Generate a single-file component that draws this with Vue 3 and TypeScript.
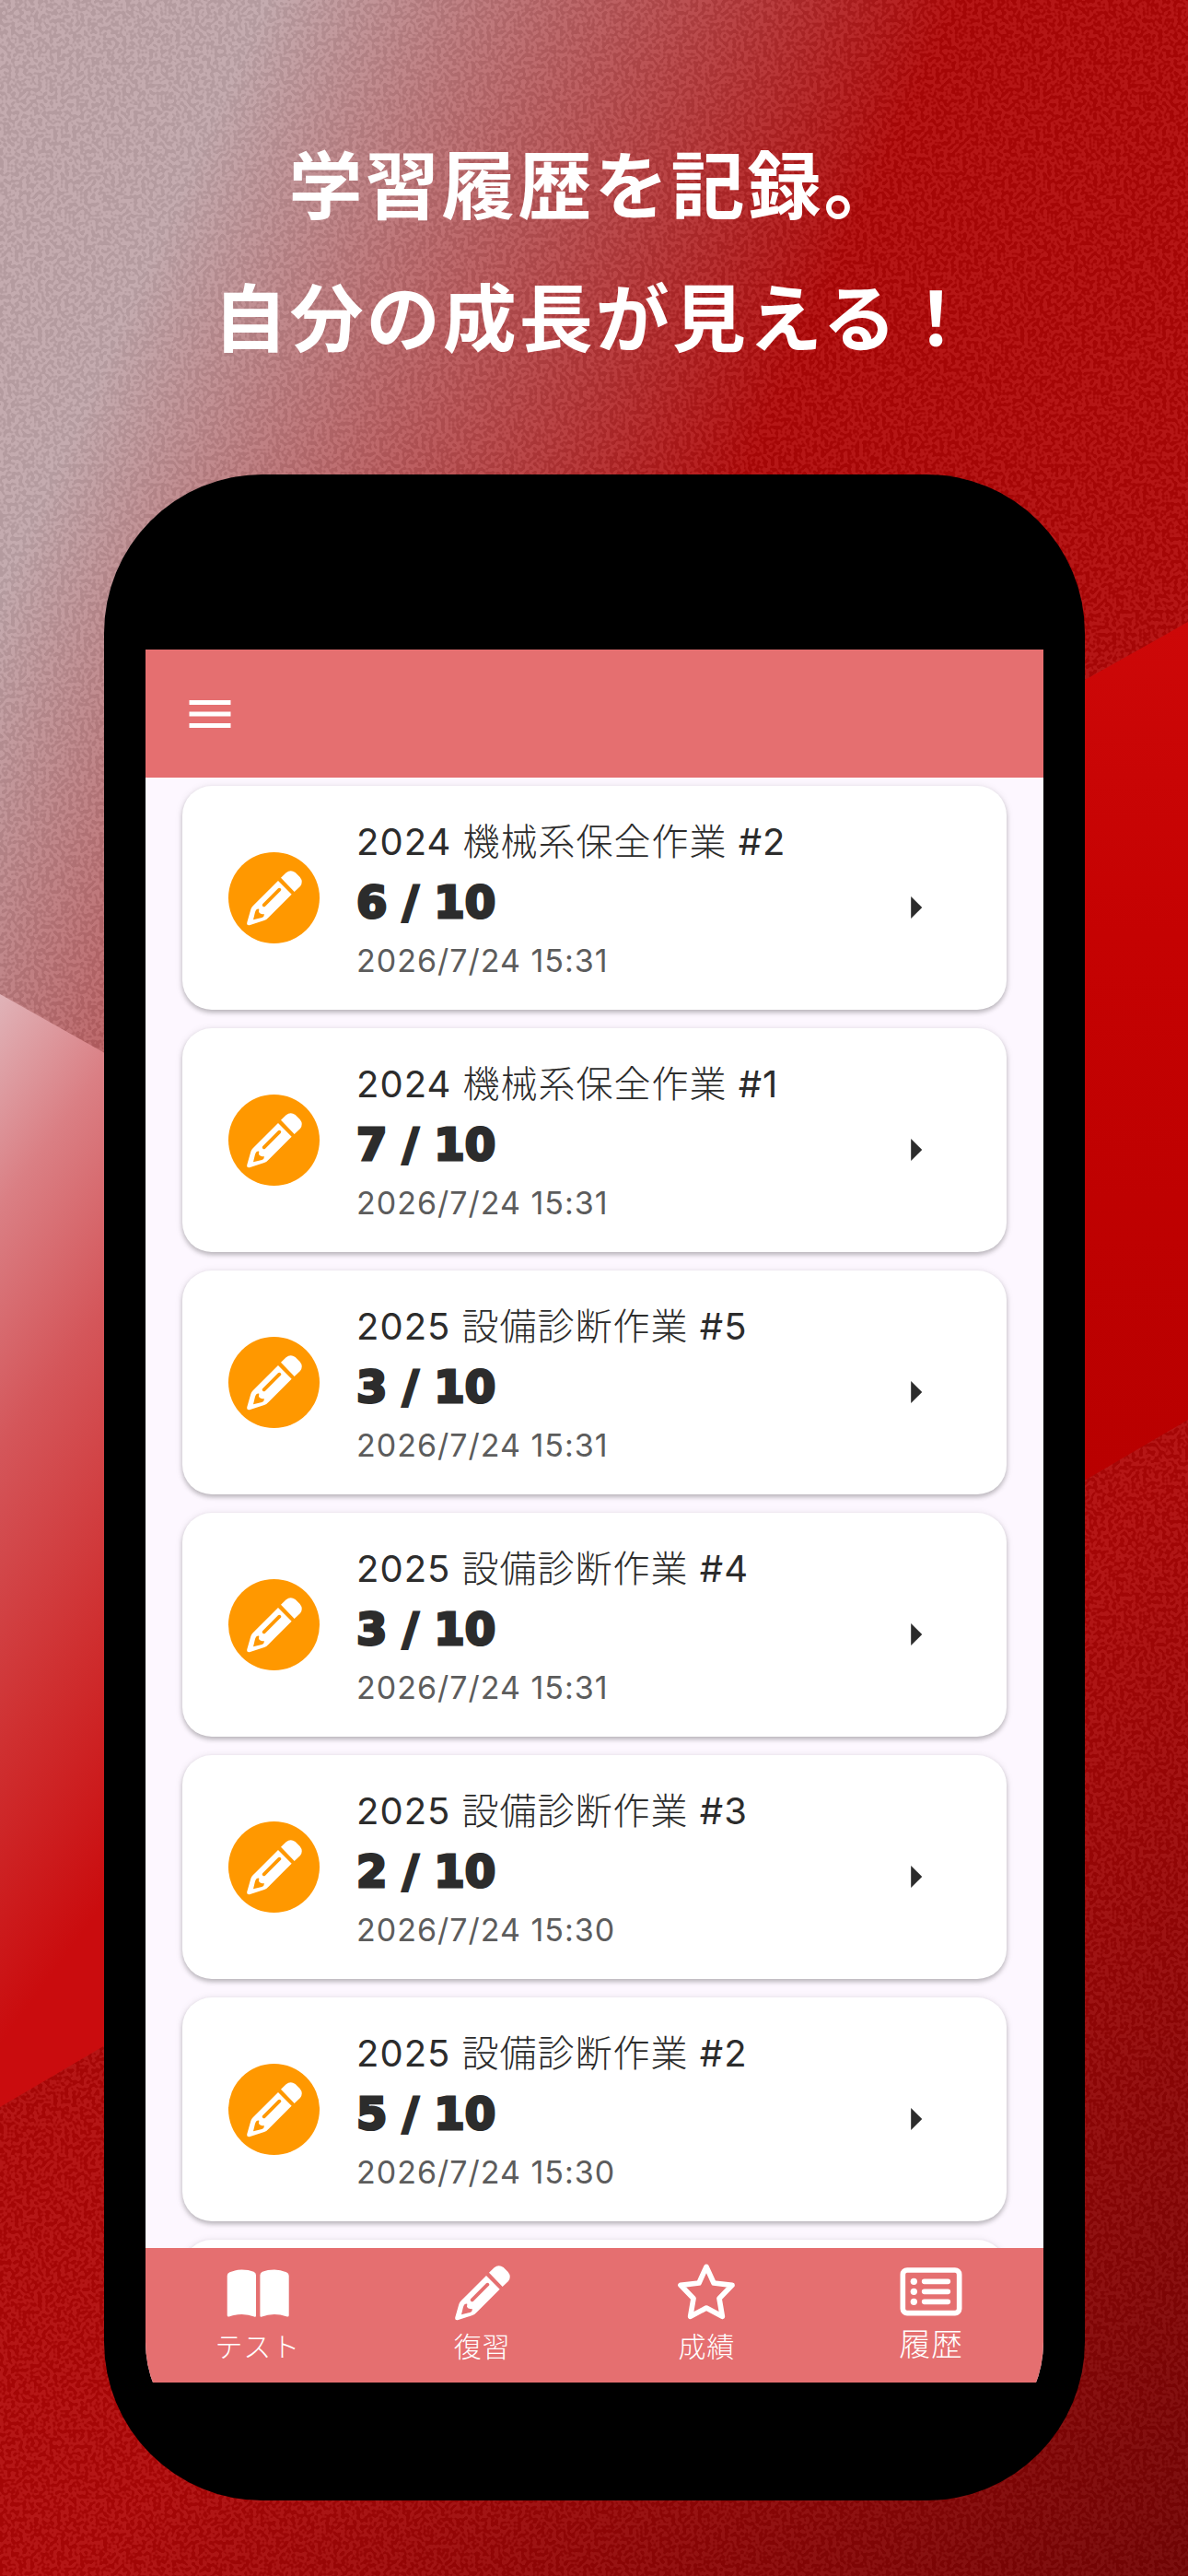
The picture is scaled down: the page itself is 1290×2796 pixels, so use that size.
<script setup lang="ts">
interface HistoryEntry {
  title: string
  score: string
  date: string
}

interface Tab {
  id: 'test' | 'review' | 'results' | 'history'
  label: string
}

const headline: string[] = ['学習履歴を記録。', '自分の成長が見える！']

const entries: HistoryEntry[] = [
  { title: '2024 機械系保全作業 #2', score: '6 / 10', date: '2026/7/24 15:31' },
  { title: '2024 機械系保全作業 #1', score: '7 / 10', date: '2026/7/24 15:31' },
  { title: '2025 設備診断作業 #5', score: '3 / 10', date: '2026/7/24 15:31' },
  { title: '2025 設備診断作業 #4', score: '3 / 10', date: '2026/7/24 15:31' },
  { title: '2025 設備診断作業 #3', score: '2 / 10', date: '2026/7/24 15:30' },
  { title: '2025 設備診断作業 #2', score: '5 / 10', date: '2026/7/24 15:30' },
]

const tabs: Tab[] = [
  { id: 'test', label: 'テスト' },
  { id: 'review', label: '復習' },
  { id: 'results', label: '成績' },
  { id: 'history', label: '履歴' },
]

const activeTab: Tab['id'] = 'history'

const pencilPath =
  'M1143 262L1160 246Q1174 234 1190 245L1205 260Q1217 275 1206 290L1187 308Z' +
  'M1134 272L1178 316L1103 391Q1097 398 1089 401L1043 416Q1030 419 1033 407L1045 365Q1047 359 1052 354Z' +
  'M1084 347L1134 297A5.5 5.5 0 0 1 1142 305L1092 355A5.5 5.5 0 0 1 1084 347Z' +
  'M1053 399L1059 374Q1063 362 1072 364L1071 373Q1075 381 1089 381Q1089 389 1081 392Z'

const pagePath =
  'M2.7 17Q2.7 14.5 5.4 13.3Q12 10.5 18.5 10.5Q26 10.5 31.5 12.8Q34 14 34 16.5V60.5' +
  'Q34 62.2 32 61.5Q26 59 18.5 59Q12 59 5.5 61.3Q2.7 62.3 2.7 60Z'
</script>

<template>
  <div class="poster">
    <svg class="backdrop" viewBox="0 0 1290 2796" preserveAspectRatio="xMidYMid slice" aria-hidden="true">
      <defs>
        <linearGradient id="sweep" gradientUnits="userSpaceOnUse" x1="241" y1="108" x2="865" y2="389">
          <stop offset="0" stop-color="#b49b9f" />
          <stop offset="1" stop-color="#a50606" />
        </linearGradient>
        <linearGradient id="shade" gradientUnits="userSpaceOnUse" x1="1430" y1="1430" x2="2043" y2="2043">
          <stop offset="0" stop-color="#000" stop-opacity="0" />
          <stop offset="1" stop-color="#000" stop-opacity="0.33" />
        </linearGradient>
        <linearGradient id="left-panel" gradientUnits="userSpaceOnUse" x1="517" y1="383" x2="1060" y2="784">
          <stop offset="0" stop-color="#e0b2b7" />
          <stop offset="0.2" stop-color="#da7f84" />
          <stop offset="0.43" stop-color="#d4565a" />
          <stop offset="0.72" stop-color="#cf3031" />
          <stop offset="1" stop-color="#ca0c0e" />
        </linearGradient>
        <linearGradient id="right-panel" x1="0" y1="0" x2="0" y2="1">
          <stop offset="0" stop-color="#cd0808" />
          <stop offset="0.35" stop-color="#c50202" />
          <stop offset="1" stop-color="#b80000" />
        </linearGradient>
        <filter id="grain" x="0" y="0" width="100%" height="100%" color-interpolation-filters="sRGB">
          <feTurbulence type="fractalNoise" baseFrequency="0.24" numOctaves="1" seed="4" />
          <feColorMatrix values="0 0 0 0 0.063  0 0 0 0 0.063  0 0 0 0 0.063  10 0 0 0 -4.5" />
        </filter>
      </defs>
      <rect width="1290" height="2796" fill="url(#sweep)" />
      <rect class="grain" width="1290" height="2796" filter="url(#grain)" />
      <rect width="1290" height="2796" fill="url(#shade)" />
      <path d="M0 1079L160 1169V2193L0 2287Z" fill="url(#left-panel)" />
      <path d="M1290 675L1130 765V1635L1290 1541Z" fill="url(#right-panel)" />
    </svg>

    <h1 class="headline">
      <span v-for="line in headline" :key="line" class="headline-line">{{ line }}</span>
    </h1>

    <main class="phone">
      <div class="glass">
        <div class="screen">
          <header class="app-bar">
            <button class="menu" type="button" aria-label="メニュー">
              <svg viewBox="0 0 24 24" aria-hidden="true">
                <path d="M3 18h18v-2H3v2zm0-5h18v-2H3v2zm0-7v2h18V6H3z" fill="#fff" />
              </svg>
            </button>
          </header>

          <ul class="history">
            <li v-for="entry in entries" :key="entry.title">
              <a class="card" href="#">
                <span class="badge">
                  <svg viewBox="1014 221 216 216" aria-hidden="true">
                    <path :d="pencilPath" fill="#fff" fill-rule="evenodd" />
                  </svg>
                </span>
                <span class="details">
                  <span class="title">{{ entry.title }}</span>
                  <span class="score">{{ entry.score }}</span>
                  <span class="date">{{ entry.date }}</span>
                </span>
                <svg class="arrow" viewBox="0 0 24 24" aria-hidden="true">
                  <path d="M10 17l5-5-5-5v10z" fill="#2c2c2c" />
                </svg>
              </a>
            </li>
            <li class="card" aria-hidden="true"></li>
          </ul>

          <nav class="tabs">
            <a
              v-for="tab in tabs"
              :key="tab.id"
              class="tab"
              :class="{ active: tab.id === activeTab }"
              :aria-current="tab.id === activeTab ? 'page' : undefined"
              href="#"
            >
              <svg v-if="tab.id === 'test'" viewBox="0 0 72 72" aria-hidden="true">
                <g fill="#fff">
                  <path :d="pagePath" />
                  <path :d="pagePath" transform="translate(72.4 0) scale(-1 1)" />
                </g>
              </svg>
              <svg v-else-if="tab.id === 'review'" viewBox="1014 221 216 216" aria-hidden="true">
                <path :d="pencilPath" fill="#fff" fill-rule="evenodd" />
              </svg>
              <svg v-else-if="tab.id === 'results'" viewBox="244 219 216 216" aria-hidden="true">
                <path
                  d="M352 241L376 294L436 301L394 344L404 403L352 375L300 403L310 344L268 301L328 294Z"
                  fill="none"
                  stroke="#fff"
                  stroke-width="17"
                  stroke-linejoin="round"
                />
              </svg>
              <svg v-else viewBox="975 219 216 216" aria-hidden="true">
                <g fill="none" stroke="#fff" stroke-width="17" stroke-linecap="round">
                  <rect x="991" y="252" width="184" height="140" rx="14" />
                  <path d="M1061 289H1138M1061 322H1138M1061 355H1138" />
                </g>
                <g fill="#fff">
                  <circle cx="1027" cy="289" r="11" />
                  <circle cx="1027" cy="322" r="11" />
                  <circle cx="1027" cy="355" r="11" />
                </g>
              </svg>
              <span class="tab-label">{{ tab.label }}</span>
            </a>
          </nav>
        </div>
      </div>
    </main>
  </div>
</template>

<style>
body {
  margin: 0;
}
</style>

<style scoped>
.poster {
  position: relative;
  box-sizing: border-box;
  min-height: 100vh;
  padding: 124px 112px 82px 113px;
  overflow: hidden;
  isolation: isolate;
  background: #a50606;
  font-family: Inter, 'Noto Sans CJK JP Light', 'Noto Sans CJK JP', sans-serif;
}

.backdrop {
  position: absolute;
  inset: 0;
  z-index: -1;
  width: 100%;
  height: 100%;
}

.grain {
  mix-blend-mode: plus-lighter;
}

.headline {
  margin: 0 0 103px;
  color: #fff;
  font-family: 'Noto Sans CJK JP', sans-serif;
  font-size: 80px;
  font-weight: 700;
  line-height: 144px;
  letter-spacing: 3px;
  text-align: center;
}

.headline-line {
  display: block;
  white-space: nowrap;
}

.phone {
  padding: 45px;
  border-radius: 172px;
  background: #000;
}

.glass {
  padding: 145px 0 83px;
  border-radius: 127px;
  overflow: hidden;
}

.screen {
  background: #fdf7ff;
}

.app-bar {
  display: flex;
  align-items: center;
  height: 139px;
  padding: 0 40px;
  background: #e56f70;
}

.menu {
  width: 60px;
  height: 60px;
  padding: 0;
  border: 0;
  background: none;
}

.menu svg {
  display: block;
}

.history {
  display: flex;
  flex-direction: column;
  gap: 20px;
  box-sizing: border-box;
  height: 1596px;
  margin: 0;
  padding: 9px 40px 0;
  overflow: hidden;
  list-style: none;
}

.card {
  display: flex;
  flex: none;
  align-items: center;
  gap: 40px;
  box-sizing: border-box;
  height: 243px;
  padding: 0 70px 0 50px;
  border-radius: 32px;
  background: #fff;
  box-shadow: 0 3px 5px rgba(0, 0, 0, 0.22), 0 1px 8px rgba(0, 0, 0, 0.1);
  color: #2c2c2c;
  text-decoration: none;
}

.badge {
  display: flex;
  flex: none;
  align-items: center;
  justify-content: center;
  width: 99px;
  height: 99px;
  border-radius: 50%;
  background: #ff9800;
}

.badge svg {
  width: 72px;
  height: 72px;
}

.details {
  display: flex;
  flex: 1;
  flex-direction: column;
  padding-top: 6px;
  white-space: nowrap;
}

.title {
  font-size: 40px;
  line-height: 60px;
  letter-spacing: 1px;
}

.score {
  font-family: 'DejaVu Sans', sans-serif;
  font-size: 48px;
  font-weight: 700;
  line-height: 70px;
  -webkit-text-stroke: 3px #2c2c2c;
}

.date {
  color: #5c5c5c;
  font-size: 34px;
  line-height: 58px;
  letter-spacing: 1px;
}

.arrow {
  flex: none;
  width: 58px;
  height: 58px;
  padding-top: 20px;
}

.tabs {
  display: flex;
  height: 146px;
  background: #e56f70;
}

.tab {
  display: flex;
  flex: 1;
  flex-direction: column;
  align-items: center;
  padding-top: 13px;
  color: #fff;
  text-decoration: none;
}

.tab svg {
  width: 72px;
  height: 72px;
}

.tab-label {
  font-size: 30px;
  font-weight: 300;
  line-height: 44px;
  letter-spacing: 1px;
}

.active .tab-label {
  font-size: 34px;
  line-height: 40px;
}
</style>
